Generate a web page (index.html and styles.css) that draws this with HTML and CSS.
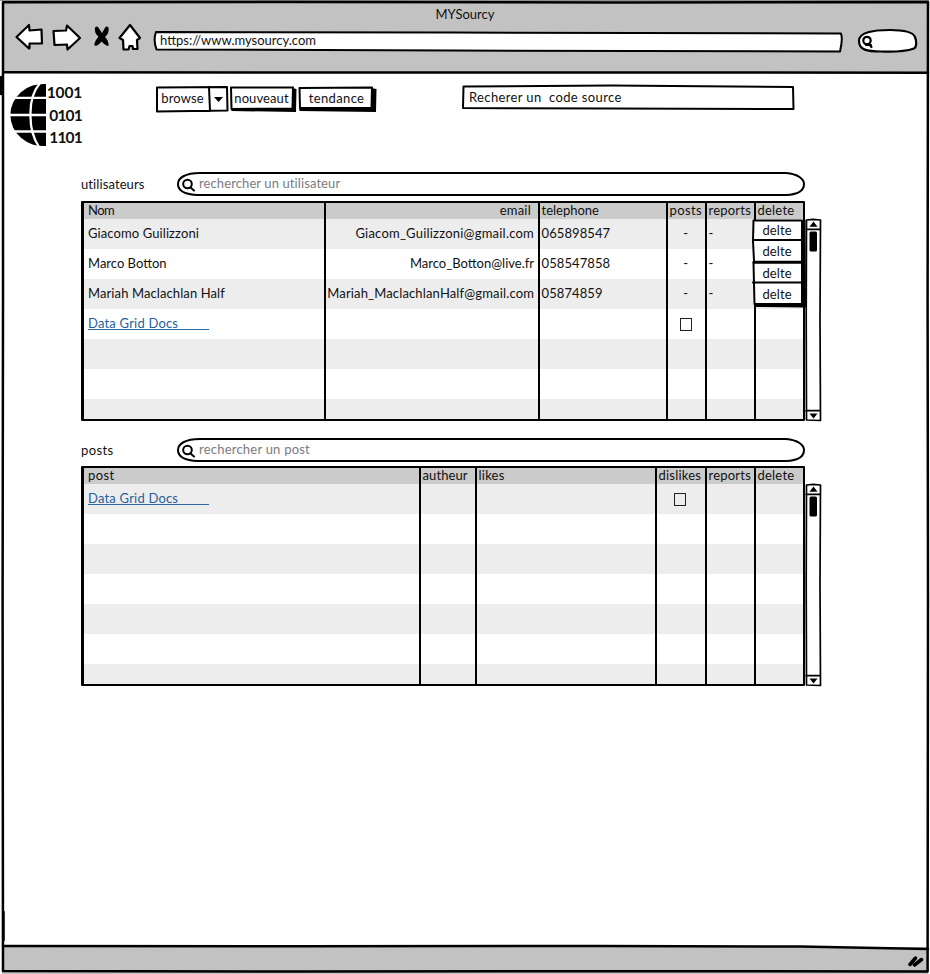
FILE: index.html
```html
<!DOCTYPE html>
<html lang="fr">
<head>
<meta charset="utf-8">
<title>MYSourcy</title>
<link rel="stylesheet" href="styles.css">
</head>
<body>
<div class="window">
  <svg class="frame" viewBox="0 0 930 974" aria-hidden="true">
    <path class="edge" d="M0 .3H929"/>
    <path d="M3 2.2 300 2 620 2.4 928 2 927.6 300 928 600 927.6 971.5 600 971.2 300 971.6 3 971 2.6 600 3 300Z"/>
    <path d="M3 72.300 300 72.600 600 72.400 928 72.700M3 946 300 946.200 600 946 800 946.600 928 949M1 77V94M3.500 912V940"/>
  </svg>
  <header class="chrome">
    <div class="title"><span class="t0">MYSourcy</span></div>
    <div class="toolbar">
      <svg class="tools" viewBox="0 0 130 34" aria-hidden="true">
        <g class="outlined">
          <path d="M2.500 16 15 4 15.500 9.500 27.500 8.500 28 22.500 15.500 22.500 15.500 27 15 27.500Z"/>
          <path d="M39.500 10 52 9.500 53 4.500 66 17 53.500 28.500 53 23.500 40.500 24Z"/>
          <path d="M105.500 17 116 4 126 17 123 19 123.500 28 119 28 118.500 25 115.500 25 114.500 28.500 109.500 28.500 109 19Z"/>
        </g>
        <path d="M81 6.500Q83 5 84 6L88 12 91.500 6Q93 5 94.500 6.500 95.500 12 91 16 95 20 94.500 25 92 25 87.500 20.500 84 25.500 80.500 24.500 79.500 22 84.500 15.500 80 12 81 6.500Z"/>
      </svg>
      <div class="url">
        <svg viewBox="0 0 690 23" aria-hidden="true"><path d="M3 2 300 2.500 688 3.500Q690 9 687 21.500L300 20.500 3.500 19.500Q0 10 3 2Z"/></svg>
        <span class="t0">https://www.mysourcy.com</span>
      </div>
      <svg class="find" viewBox="0 0 62 26" aria-hidden="true"><path d="M2 13C2 4 18 2 33 2 45 2 56 4 58 9 60 14 59.500 19 57 20.500 45 24.500 34 24 24 23.500 10 23.500 2 22 2 13Z"/><circle cx="10" cy="12.500" r="3.700"/><path d="M9 17 14 17M12 16 14.500 19"/></svg>
    </div>
  </header>

  <main>
    <div class="nav-row">
      <div class="logo">
        <svg viewBox="0 0 37 64" aria-hidden="true">
          <path d="M36 1V63A33 31.100 0 1 1 36 1Z"/>
          <path class="cut" d="M0 14.800H37M0 32H37M0 48.500H37M30 0Q20 12 20.500 31.500 20 50 29 64"/>
        </svg>
        <div class="bits"><span>1001</span><span class="tight">0101</span><span class="tight">1101</span></div>
      </div>
      <nav>
        <button class="combo"><svg viewBox="0 0 75 28" aria-hidden="true"><path d="M2 2.500 72 2 72.500 25.500 2 26.500ZM54 2 55 26"/><path class="solid" d="M59 12H68L63.500 17Z"/></svg><span>browse</span></button>
        <button class="fresh"><svg viewBox="0 0 68 28" aria-hidden="true"><path class="solid" d="M1 22 62 24 62 3 66.500 4 66 27 1.500 26Z"/><path d="M1 2.500 63 2.500 62.500 23.500 1.500 24Z"/></svg><span>nouveaut</span></button>
        <button class="trend"><svg viewBox="0 0 80 28" aria-hidden="true"><path class="solid" d="M1 22 73 23 73 3 78.500 4 78 27 1.500 26Z"/><path d="M1.500 3 74 2.500 73.500 23 2 23Z"/></svg><span class="t3">tendance</span></button>
      </nav>
      <div class="code-search"><svg viewBox="0 0 335 27" aria-hidden="true"><path d="M2.500 2.500 150 1.500 332 3 332.500 25 150 24.500 2 24Z"/></svg><span class="t3">Recherer un&nbsp; code source</span></div>
    </div>

    <section class="users">
      <div class="search-row">
        <span class="label">utilisateurs</span>
        <div class="pill"><svg viewBox="0 0 630 26" aria-hidden="true"><path d="M24 2 610 2C622 3 628 8 628 13 628 20 622 23.500 610 24L22 24C8 23.500 2 20 2 13 2 7 9 2 24 2Z"/><circle cx="11.500" cy="13" r="4.300"/><path d="M14.500 16.500 18 19.500"/></svg><span>rechercher un utilisateur</span></div>
      </div>
      <div class="grid-wrap">
        <div class="grid">
          <div class="cell head"><span class="snug">Nom</span></div><div class="cell head right"><span class="t2">email</span></div><div class="cell head"><span class="t0">telephone</span></div><div class="cell head"><span class="t3">posts</span></div><div class="cell head"><span class="t2">reports</span></div><div class="cell head"><span class="t2">delete</span></div>
          <div class="cell odd">Giacomo Guilizzoni</div><div class="cell odd right"><span class="t2">Giacom_Guilizzoni@gmail.com</span></div><div class="cell odd">065898547</div><div class="cell odd mid">-</div><div class="cell odd">-</div><div class="cell odd"></div>
          <div class="cell"><span class="t0">Marco Botton</span></div><div class="cell right"><span class="t0">Marco_Botton@live.fr</span></div><div class="cell">058547858</div><div class="cell mid">-</div><div class="cell">-</div><div class="cell"></div>
          <div class="cell odd">Mariah Maclachlan Half</div><div class="cell odd right"><span class="t15">Mariah_MaclachlanHalf@gmail.com</span></div><div class="cell odd">05874859</div><div class="cell odd mid">-</div><div class="cell odd">-</div><div class="cell odd"></div>
          <div class="cell"><a>Data Grid Docs</a></div><div class="cell"></div><div class="cell"></div><div class="cell mid"><i class="box"></i></div><div class="cell"></div><div class="cell"></div>
          <div class="cell odd"></div><div class="cell odd"></div><div class="cell odd"></div><div class="cell odd"></div><div class="cell odd"></div><div class="cell odd"></div>
          <div class="cell"></div><div class="cell"></div><div class="cell"></div><div class="cell"></div><div class="cell"></div><div class="cell"></div>
          <div class="cell odd"></div><div class="cell odd"></div><div class="cell odd"></div><div class="cell odd"></div><div class="cell odd"></div><div class="cell odd"></div>
        </div>
        <svg class="scroll" viewBox="0 0 17 204" aria-hidden="true"><path d="M1.500 2 8 1.300 15.500 2 15 100 15.500 202.500 1.500 202 1.200 100ZM1 11.300H15M1 192.700H15"/><path class="solid" d="M4.500 8.800H12.500L8.500 3.500ZM4.500 195.500H12.500L8.500 200.500Z"/><rect class="solid" x="4.500" y="13.500" width="7.500" height="20" rx="1.500"/></svg>
        <div class="actions">
          <svg viewBox="0 0 54 90" aria-hidden="true"><path class="solid" d="M49 1H53.500L54 88.500 3 88 2 84 50 85Z"/><path class="fill" d="M1.500 1.500H50V85H2.500L2 65 1.500 44 2 42 1 22Z"/><path d="M1 21H50M1 63.500H50"/><path class="thick" d="M2 43.300H50"/></svg>
          <button>delte</button><button>delte</button><button>delte</button><button>delte</button>
        </div>
      </div>
    </section>

    <section class="posts">
      <div class="search-row">
        <span class="label t3">posts</span>
        <div class="pill"><svg viewBox="0 0 630 26" aria-hidden="true"><path d="M24 2 610 2C622 3 628 8 628 13 628 20 622 23.500 610 24L22 24C8 23.500 2 20 2 13 2 7 9 2 24 2Z"/><circle cx="11.500" cy="13" r="4.300"/><path d="M14.500 16.500 18 19.500"/></svg><span class="t2">rechercher un post</span></div>
      </div>
      <div class="grid-wrap">
        <div class="grid">
          <div class="cell head"><span class="t3">post</span></div><div class="cell head"><span>autheur</span></div><div class="cell head"><span class="t2">likes</span></div><div class="cell head"><span class="t2">dislikes</span></div><div class="cell head"><span class="t2">reports</span></div><div class="cell head"><span class="t2">delete</span></div>
          <div class="cell odd"><a>Data Grid Docs</a></div><div class="cell odd"></div><div class="cell odd"></div><div class="cell odd mid"><i class="box"></i></div><div class="cell odd"></div><div class="cell odd"></div>
          <div class="cell"></div><div class="cell"></div><div class="cell"></div><div class="cell"></div><div class="cell"></div><div class="cell"></div>
          <div class="cell odd"></div><div class="cell odd"></div><div class="cell odd"></div><div class="cell odd"></div><div class="cell odd"></div><div class="cell odd"></div>
          <div class="cell"></div><div class="cell"></div><div class="cell"></div><div class="cell"></div><div class="cell"></div><div class="cell"></div>
          <div class="cell odd"></div><div class="cell odd"></div><div class="cell odd"></div><div class="cell odd"></div><div class="cell odd"></div><div class="cell odd"></div>
          <div class="cell"></div><div class="cell"></div><div class="cell"></div><div class="cell"></div><div class="cell"></div><div class="cell"></div>
          <div class="cell odd"></div><div class="cell odd"></div><div class="cell odd"></div><div class="cell odd"></div><div class="cell odd"></div><div class="cell odd"></div>
        </div>
        <svg class="scroll" viewBox="0 0 17 204" aria-hidden="true"><path d="M1.500 2 8 1.300 15.500 2 15 100 15.500 202.500 1.500 202 1.200 100ZM1 11.300H15M1 192.700H15"/><path class="solid" d="M4.500 8.800H12.500L8.500 3.500ZM4.500 195.500H12.500L8.500 200.500Z"/><rect class="solid" x="4.500" y="13.500" width="7.500" height="20" rx="1.500"/></svg>
      </div>
    </section>
  </main>
  <footer><svg viewBox="0 0 18 14" aria-hidden="true"><path d="M3 11.500 8.500 5M7.500 12 14.500 6.500"/></svg></footer>
</div>
</body>
</html>
```
FILE: styles.css
```css
* { box-sizing: border-box; }
body { margin: 0; background: #fff; color: #111; font: 13px/16px Lato, "Open Sans", sans-serif; letter-spacing: .1px; white-space: nowrap; }
svg { display: block; fill: none; stroke: #000; stroke-width: 2; stroke-linejoin: round; stroke-linecap: round; }
.solid { fill: #000; stroke: none; }
button { border: 0; background: none; padding: 0; color: inherit; font: inherit; letter-spacing: inherit; position: relative; }
button span, .url span, .code-search span, .pill span { position: relative; }

/* tracking steps */
.snug { letter-spacing: -.5px; }
.t0 { letter-spacing: 0; }
.t15 { letter-spacing: .15px; }
.t2 { letter-spacing: .22px; }
.t3 { letter-spacing: .37px; }

.window { position: relative; display: flex; flex-direction: column; width: 930px; height: 974px; overflow: hidden; }
.frame { position: absolute; inset: 0; width: 930px; height: 974px; stroke-width: 2.5; pointer-events: none; z-index: 2; }
.frame .edge { stroke: #7d857d; stroke-width: 1; }

.chrome { height: 73px; margin: 0 2px; background: #c2c2c2; padding-top: 6px; }
.title { text-align: center; }
.toolbar { display: flex; align-items: flex-start; padding-left: 12px; }
.tools { width: 130px; height: 34px; margin-top: -1px; fill: #000; stroke: none; }
.outlined { fill: #fff; stroke: #000; stroke-width: 2.2; }
.url { position: relative; width: 690px; height: 23px; margin: 8px 0 0 9px; padding: 2px 0 0 7px; }
.url svg, .code-search svg, .pill svg, button svg, .actions > svg { position: absolute; left: 0; top: 0; width: 100%; height: 100%; fill: #fff; }
.find { width: 62px; height: 26px; margin: 6px 0 0 14px; fill: #fff; stroke-width: 2.200; }

main { flex: 1; padding: 11px 0 0 10px; }
.nav-row { display: flex; align-items: flex-start; height: 63px; }
.logo { display: flex; width: 73px; }
.logo svg { width: 37px; height: 64px; fill: #000; stroke: none; flex: none; margin-top: -1px; }
.logo .cut { fill: none; stroke: #fff; stroke-width: 2.3; }
.bits { display: flex; flex-direction: column; align-items: flex-end; width: 35px; margin-top: -3px; font: bold 15.500px/22.500px Lato, sans-serif; letter-spacing: -.2px; }
.tight { letter-spacing: -.8px; }
nav { display: flex; margin: 1px 0 0 72px; }
nav .solid { fill: #000; }
.combo { width: 75px; height: 28px; padding: 0 20px 2px 0; }
.fresh { width: 68px; height: 28px; padding: 0 5px 2px 0; }
.trend { width: 80px; height: 28px; padding: 0 3px 2px 0; }
.code-search { position: relative; width: 335px; height: 27px; margin-left: 83px; padding: 5px 0 0 8px; }

.search-row { display: flex; align-items: center; height: 26px; }
.users { margin-top: 24px; }
.posts { margin-top: 15px; }
.label { width: 95px; margin-left: 71px; }
.pill { position: relative; width: 630px; height: 26px; padding: 4px 0 0 23px; color: #7b7b80; }

.grid-wrap { position: relative; display: flex; align-items: flex-start; margin: 4px 0 0 71px; }
.posts .grid-wrap { margin-top: 3px; }
.grid { display: grid; width: 724px; grid-template-rows: 16px repeat(6, 30px) 20px; border: 2px solid #000; border-left-width: 3px; border-radius: 1px; }
.users .grid { grid-template-columns: 240px 214px 128px 39px 49px 49px; }
.posts .grid { grid-template-columns: 335px 56px 180px 50px 49px 49px; }
.cell { border-left: 2px solid #000; padding-left: 1.500px; line-height: 28px; overflow: hidden; }
.cell:nth-child(6n+1) { border-left: 0; padding-left: 4px; }
.odd { background: #ededed; }
.head { background: #cbcbcb; line-height: 15px; }
.right { text-align: right; padding: 0 4px 0 0; }
.head.right { padding-right: 7px; }
.mid { text-align: center; padding-right: 3px; }
a { display: inline-block; width: 121px; height: 21px; border-bottom: 1px solid #2b6ba5; color: #24619b; letter-spacing: .2px; vertical-align: top; }
.box { display: inline-block; width: 12px; height: 13px; border: 1.500px solid #222; vertical-align: middle; }
.scroll { width: 17px; height: 204px; margin: 17px 0 0 -.5px; stroke-width: 1.700; fill: #fff; }
.actions { position: absolute; left: 671px; top: 18px; width: 54px; height: 90px; display: grid; grid-template-rows: 21px 21px 23px 19px; padding-right: 4px; }
.actions svg { width: 54px; }
.actions .thick { stroke-width: 3; }

footer { height: 27px; margin: 0 2px; background: #c2c2c2; display: flex; justify-content: flex-end; padding: 6px 3px 0 0; }
footer svg { width: 18px; height: 14px; stroke-width: 3.500; }
```
